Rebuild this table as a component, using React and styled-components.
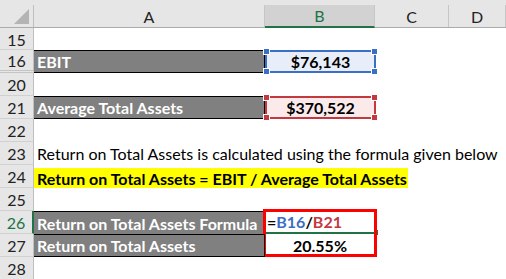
import React from "react";
import styled, { createGlobalStyle } from "styled-components";

const Global = createGlobalStyle`
  html, body { margin: 0; padding: 0; background: #ffffff; }
  body { font-family: "Lato", "Open Sans", sans-serif; overflow: hidden; }
`;

const COLS = "34px 231px 110px 74px 1fr";

const Sheet = styled.div`
  width: 506px;
  height: 279px;
  overflow: hidden;
  font-size: 16px;
  color: #000;
`;

const HeaderRow = styled.div`
  display: grid;
  grid-template-columns: ${COLS};
  height: 28px;
  background: #e6e6e6;
  border-bottom: 1px solid #ababab;
  box-sizing: border-box;
`;

const Corner = styled.div`
  position: relative;
  border-right: 1px solid #bfbfbf;
  margin-top: 5px;
`;

const ColHead = styled.div`
  display: flex;
  align-items: center;
  justify-content: center;
  margin-top: 5px;
  border-right: 1px solid #c6c6c6;
  color: ${(p) => (p.$active ? "#217346" : "#222")};
  background: ${(p) => (p.$active ? "#d2d2d2" : "transparent")};
  border-bottom: ${(p) => (p.$active ? "2px solid #217346" : "0")};
  margin-bottom: ${(p) => (p.$active ? "-1px" : "0")};
  font-size: 16px;
`;

const Row = styled.div`
  display: grid;
  grid-template-columns: ${COLS};
  height: ${(p) => p.$h || 23}px;
`;

const RowHead = styled.div`
  display: flex;
  align-items: center;
  justify-content: center;
  background: #e6e6e6;
  color: ${(p) => (p.$active ? "#217346" : "#222")};
  border-right: ${(p) => (p.$active ? "2px solid #217346" : "1px solid #bfbfbf")};
  border-bottom: ${(p) => (p.$hidden ? "3px double #c4c4c4" : "1px solid #d0d0d0")};
  box-sizing: border-box;
  padding-top: 1px;
`;

const Cell = styled.div`
  display: flex;
  align-items: center;
  white-space: nowrap;
  box-sizing: border-box;
  padding: 0 3px;
  min-width: 0;
  position: relative;
  justify-content: ${(p) => (p.$center ? "center" : "flex-start")};
  font-weight: ${(p) => (p.$bold ? 700 : 400)};
  grid-column: ${(p) => p.$span || "auto"};
`;

const LabelCell = styled(Cell)`
  background: #808080;
  color: #ffffff;
  font-weight: 700;
  border-top: ${(p) => (p.$noTop ? "0" : "1px solid #000")};
  border-bottom: ${(p) => (p.$bottom ? "1px solid #000" : "0")};
  border-right: 1px solid #000;
`;

const RefCell = styled(Cell)`
  justify-content: center;
  font-weight: 700;
  background: ${(p) => p.$fill};
  border: 2px solid ${(p) => p.$line};
  margin-right: -1px;
`;

const Handle = styled.span`
  position: absolute;
  width: 5px;
  height: 5px;
  background: ${(p) => p.$line};
  outline: 1px solid #ffffff;
  ${(p) => (p.$top ? "top: -3px;" : "bottom: -3px;")}
  ${(p) => (p.$left ? "left: -3px;" : "right: -3px;")}
`;

const Highlight = styled.span`
  background: #ffff00;
  align-self: flex-end;
  height: 20px;
  display: flex;
  align-items: center;
  margin-left: -3px;
  padding: 0 1px 0 3px;
  font-weight: 700;
`;

const FormulaCell = styled(Cell)`
  padding-left: 2px;
  font-weight: 700;
  border-bottom: 2px solid #217346;
`;

const Frame = styled.span`
  position: absolute;
  left: -2px;
  top: -2px;
  width: 114px;
  height: 48px;
  border: 3px solid #ff0000;
  box-sizing: border-box;
  pointer-events: none;
`;

const EditHandle = styled.span`
  position: absolute;
  right: -3px;
  bottom: -3px;
  width: 4px;
  height: 5px;
  background: #217346;
`;

const Ref = styled.span`
  color: ${(p) => p.$color};
`;

const TriangleSvg = styled.svg`
  position: absolute;
  right: 3px;
  bottom: 2px;
`;

function RefBox({ line, fill, children }) {
  return (
    <RefCell $line={line} $fill={fill}>
      {children}
      <Handle $line={line} $top $left />
      <Handle $line={line} $top />
      <Handle $line={line} $left />
      <Handle $line={line} />
    </RefCell>
  );
}

export default function App() {
  return (
    <>
      <Global />
      <Sheet>
        <HeaderRow>
          <Corner>
            <TriangleSvg width="16" height="16" viewBox="0 0 16 16">
              <polygon points="15,0 15,15 0,15" fill="#b4b4b4" />
            </TriangleSvg>
          </Corner>
          <ColHead>A</ColHead>
          <ColHead $active>B</ColHead>
          <ColHead>C</ColHead>
          <ColHead>D</ColHead>
        </HeaderRow>

        <Row $h={22}>
          <RowHead>15</RowHead>
          <Cell />
        </Row>

        <Row>
          <RowHead $hidden>16</RowHead>
          <LabelCell $bottom>EBIT</LabelCell>
          <RefBox line="#3b6fc6" fill="#e8eef9">$76,143</RefBox>
        </Row>

        <Row>
          <RowHead>20</RowHead>
          <Cell />
        </Row>

        <Row>
          <RowHead>21</RowHead>
          <LabelCell $bottom>Average Total Assets</LabelCell>
          <RefBox line="#c4383f" fill="#fbeaea">$370,522</RefBox>
        </Row>

        <Row>
          <RowHead>22</RowHead>
          <Cell />
        </Row>

        <Row>
          <RowHead>23</RowHead>
          <Cell $span="2 / 6">Return on Total Assets is calculated using the formula given below</Cell>
        </Row>

        <Row>
          <RowHead>24</RowHead>
          <Cell $span="2 / 6">
            <Highlight>Return on Total Assets = EBIT / Average Total Assets</Highlight>
          </Cell>
        </Row>

        <Row>
          <RowHead>25</RowHead>
          <Cell />
        </Row>

        <Row>
          <RowHead $active>26</RowHead>
          <LabelCell>Return on Total Assets Formula</LabelCell>
          <FormulaCell>
            =<Ref $color="#3b6fc6">B16</Ref>/<Ref $color="#c4383f">B21</Ref>
            <EditHandle />
            <Frame />
          </FormulaCell>
        </Row>

        <Row>
          <RowHead>27</RowHead>
          <LabelCell $bottom>Return on Total Assets</LabelCell>
          <Cell $center $bold>20.55%</Cell>
        </Row>

        <Row>
          <RowHead>28</RowHead>
          <Cell />
        </Row>
      </Sheet>
    </>
  );
}
